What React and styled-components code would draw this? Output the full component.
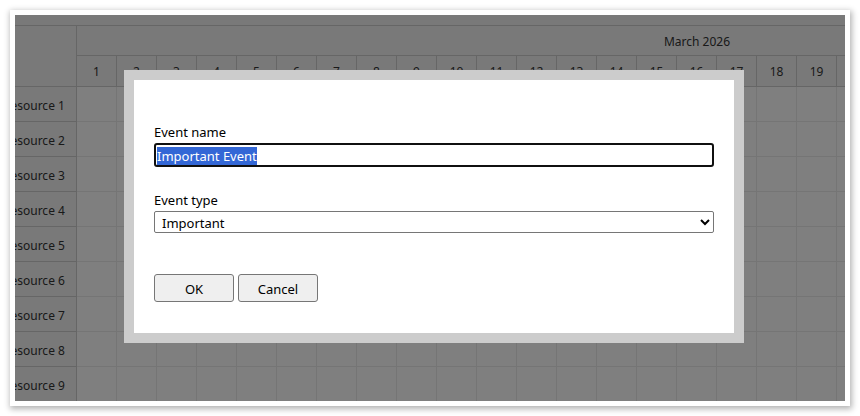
import React, { useEffect, useRef } from "react";
import styled, { createGlobalStyle } from "styled-components";

const GlobalStyle = createGlobalStyle`
  html, body {
    margin: 0;
    padding: 0;
    background: #ffffff;
  }
  body {
    font-family: "Noto Sans", "Open Sans", sans-serif;
  }
  * {
    box-sizing: border-box;
  }
`;

const days = Array.from({ length: 31 }, (_, i) => i + 1);
const resources = Array.from({ length: 9 }, (_, i) => `Resource ${i + 1}`);

const App = () => {
  const nameRef = useRef(null);

  useEffect(() => {
    if (nameRef.current) {
      nameRef.current.focus();
      nameRef.current.select();
    }
  }, []);

  return (
    <Page>
      <GlobalStyle />
      <Frame>
        <Screen>
          <Scheduler>
            <TopStrip />
            <HeaderRow>
              <Corner />
              <Timeline>
                <MonthCell>March 2026</MonthCell>
                <Days>
                  {days.map((d) => (
                    <DayCell key={d}>{d}</DayCell>
                  ))}
                </Days>
              </Timeline>
            </HeaderRow>
            {resources.map((r) => (
              <Row key={r}>
                <RowHeader>{r}</RowHeader>
                {days.map((d) => (
                  <Cell key={d} />
                ))}
              </Row>
            ))}
          </Scheduler>
          <Overlay />
          <Dialog>
            <Field>
              <Label htmlFor="name">Event name</Label>
              <NameInput
                id="name"
                ref={nameRef}
                defaultValue="Important Event"
              />
            </Field>
            <Field $gap={23}>
              <Label htmlFor="type">Event type</Label>
              <TypeSelect id="type" defaultValue="important">
                <option value="important">Important</option>
                <option value="normal">Normal</option>
              </TypeSelect>
            </Field>
            <Buttons>
              <Button>OK</Button>
              <Button>Cancel</Button>
            </Buttons>
          </Dialog>
        </Screen>
      </Frame>
    </Page>
  );
};

const Page = styled.div`
  padding: 10px;
  width: 860px;
  height: 416px;
`;

const Frame = styled.div`
  width: 840px;
  height: 396px;
  padding: 5px;
  background: #ffffff;
  box-shadow: 1px 2px 6px 1px rgba(0, 0, 0, 0.3);
`;

const Screen = styled.div`
  position: relative;
  width: 830px;
  height: 386px;
  overflow: hidden;
  background: #ffffff;
`;

const Scheduler = styled.div`
  display: flex;
  flex-direction: column;
  margin-left: -12px;
  font-size: 12px;
  color: #333333;
`;

const TopStrip = styled.div`
  height: 11px;
  background: #f3f3f3;
  border-bottom: 1px solid #cccccc;
  width: 1400px;
`;

const HeaderRow = styled.div`
  display: flex;
  background: #f3f3f3;
  border-bottom: 1px solid #cccccc;
`;

const Corner = styled.div`
  width: 74px;
  flex: none;
  border-right: 1px solid #cccccc;
`;

const Timeline = styled.div`
  display: flex;
  flex-direction: column;
`;

const MonthCell = styled.div`
  width: 1240px;
  height: 30px;
  padding-top: 2px;
  display: flex;
  align-items: center;
  justify-content: center;
  border-bottom: 1px solid #cccccc;
`;

const Days = styled.div`
  display: flex;
`;

const DayCell = styled.div`
  width: 40px;
  height: 30px;
  padding-top: 1px;
  flex: none;
  display: flex;
  align-items: center;
  justify-content: center;
  border-right: 1px solid #cccccc;
`;

const Row = styled.div`
  display: flex;
  height: 35px;
`;

const RowHeader = styled.div`
  width: 74px;
  flex: none;
  display: flex;
  align-items: center;
  padding-top: 2px;
  white-space: nowrap;
  background: #f3f3f3;
  border-right: 1px solid #cccccc;
  border-bottom: 1px solid #cccccc;
`;

const Cell = styled.div`
  width: 40px;
  flex: none;
  background: #ffffff;
  border-right: 1px solid #eaeaea;
  border-bottom: 1px solid #eaeaea;
`;

const Overlay = styled.div`
  position: absolute;
  inset: 0;
  background: rgba(0, 0, 0, 0.5);
`;

const Dialog = styled.div`
  position: absolute;
  left: 109px;
  top: 55px;
  width: 620px;
  height: 273px;
  border: 10px solid #cccccc;
  background: #ffffff;
  padding: 42px 20px 31px;
  display: flex;
  flex-direction: column;
  font-size: 13px;
  color: #000000;
`;

const Field = styled.div`
  display: flex;
  flex-direction: column;
  gap: 1px;
  margin-top: ${(props) => props.$gap || 0}px;
`;

const Label = styled.label`
  line-height: 20px;
  height: 20px;
`;

const NameInput = styled.input`
  height: 24px;
  width: 560px;
  border: 2px solid #101010;
  border-radius: 3px;
  outline: none;
  padding: 1px 1px 0;
  font: inherit;
  font-size: 13px;
  color: #000000;
  background: #ffffff;
  &::selection {
    background: #3367d6;
    color: #ffffff;
  }
`;

const TypeSelect = styled.select`
  height: 22px;
  width: 560px;
  border: 1px solid #767676;
  border-radius: 2px;
  padding: 1px 0 0 3px;
  font: inherit;
  font-size: 13px;
  color: #000000;
  background: #ffffff;
  outline: none;
`;

const Buttons = styled.div`
  display: flex;
  gap: 4px;
  margin-top: 41px;
`;

const Button = styled.button`
  width: 80px;
  height: 28px;
  border: 1px solid #767676;
  border-radius: 3px;
  background: #efefef;
  font: inherit;
  font-size: 13px;
  color: #000000;
  padding: 2px 0 0;
`;

export default App;
